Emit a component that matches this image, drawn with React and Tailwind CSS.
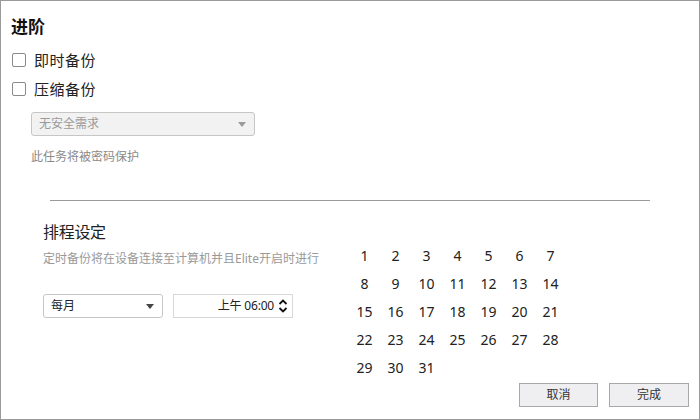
import React from 'react';

const font = { fontFamily: '"Noto Sans", "Noto Sans CJK SC", sans-serif' };

function Caret({ className = '' }) {
  return (
    <svg width="8" height="5" viewBox="0 0 8 5" className={className}>
      <path d="M0 0 L8 0 L4 5 Z" fill="currentColor" />
    </svg>
  );
}

function CheckRow({ label }) {
  return (
    <label className="flex h-[29px] items-center">
      <span className="ml-[11px] h-[14px] w-[14px] rounded-[2px] border border-[#8a8a8a] bg-white" />
      <span className="ml-[8px] text-[15px] leading-[20px] tracking-[0.5px] text-[#222]">{label}</span>
    </label>
  );
}

const days = Array.from({ length: 31 }, (_, i) => i + 1);

export default function App() {
  return (
    <div style={font} className="flex h-[420px] w-[700px] flex-col border border-[#9a9a9a] bg-white">
      <h1 className="ml-[10px] mt-[14px] text-[17px] font-bold leading-[24px] text-[#111]">进阶</h1>
      <div className="mt-[6px]">
        <CheckRow label="即时备份" />
        <CheckRow label="压缩备份" />
      </div>

      <div className="ml-[30px] mt-[9px] flex h-[24px] w-[224px] items-center justify-between rounded-[3px] border border-[#c6c6c6] bg-[#f2f2f2] pl-[7px] pr-[8px]">
        <span className="text-[12px] leading-[16px] text-[#9a9a9a]">无安全需求</span>
        <Caret className="text-[#9a9a9a]" />
      </div>
      <p className="ml-[30px] mt-[13px] text-[12px] leading-[16px] text-[#8a8a8a]">此任务将被密码保护</p>

      <div className="ml-[49px] mt-[35px] h-px w-[600px] bg-[#9a9a9a]" />

      <div className="flex">
        <div className="w-[348px] shrink-0 pl-[42px]">
          <h2 className="mt-[20px] text-[16px] font-normal leading-[22px] tracking-[-0.3px] text-[#222]">排程设定</h2>
          <p className="mt-[8px] whitespace-nowrap text-[12px] leading-[16px] text-[#999]">定时备份将在设备连接至计算机并且Elite开启时进行</p>
          <div className="mt-[27px] flex gap-[10px]">
            <div className="flex h-[24px] w-[120px] items-center justify-between rounded-[3px] border border-[#c6c6c6] bg-white pl-[7px] pr-[8px]">
              <span className="text-[12px] leading-[16px] text-[#222]">每月</span>
              <Caret className="text-[#444]" />
            </div>
            <div className="flex h-[24px] w-[120px] items-center justify-end border border-[#d8d8d8] bg-white pr-[4px]">
              <span className="text-[12px] leading-[16px] tracking-[-0.2px] text-[#222]">上午 06:00</span>
              <svg width="10" height="14" viewBox="0 0 10 14" className="ml-[4px]">
                <path d="M1.5 5 L5 1.5 L8.5 5" fill="none" stroke="#111" strokeWidth="1.8" />
                <path d="M1.5 9 L5 12.5 L8.5 9" fill="none" stroke="#111" strokeWidth="1.8" />
              </svg>
            </div>
          </div>
        </div>

        <div className="mt-[40px] grid w-[217px] shrink-0 grid-cols-7">
          {days.map((d) => (
            <span key={d} className="flex h-[28px] items-center justify-center text-[14px] text-[#222]">
              {d}
            </span>
          ))}
        </div>
      </div>

      <div className="mr-[10px] mt-[2px] flex justify-end gap-[11px]">
        <button className="h-[24px] w-[79px] border border-[#a8a8a8] bg-[#efeff2] text-[12px] text-[#333]">取消</button>
        <button className="h-[24px] w-[80px] border border-[#a8a8a8] bg-[#efeff2] text-[12px] text-[#333]">完成</button>
      </div>
    </div>
  );
}
